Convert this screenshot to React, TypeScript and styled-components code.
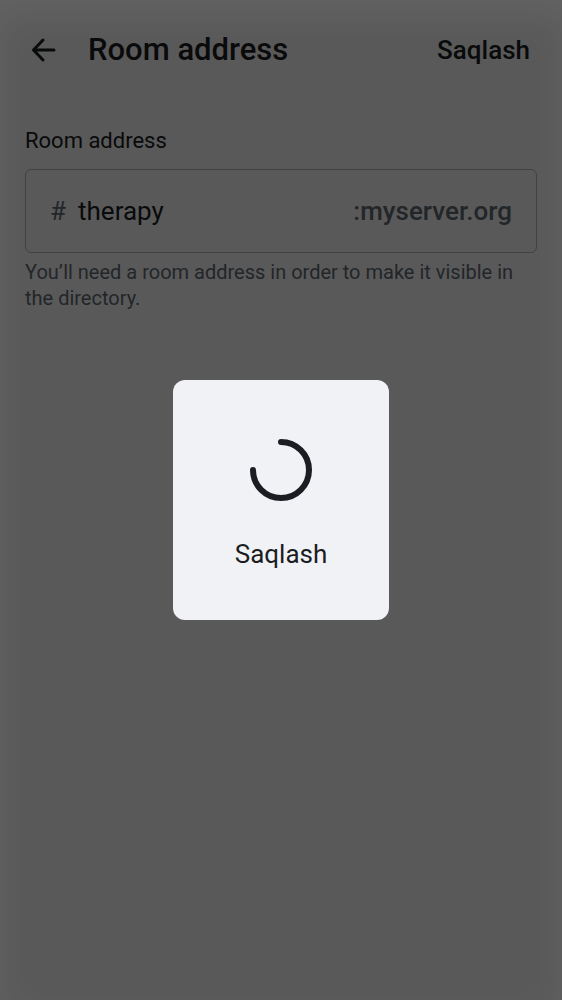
import React, { useState } from "react";
import styled, { createGlobalStyle, css } from "styled-components";

const GlobalStyle = createGlobalStyle`
  *, *::before, *::after { box-sizing: border-box; }
  body {
    margin: 0;
    background: #ffffff;
    color: #1b1d22;
    font-family: Roboto, "Noto Sans", sans-serif;
  }
`;

const bodyLarge = css`
  font-family: inherit;
  font-size: 26px;
  line-height: 36px;
`;

const bodySmall = css`
  font-size: 20px;
  line-height: 26px;
`;

const Screen = styled.div`
  min-height: 100vh;
  display: flex;
  flex-direction: column;
`;

const TopBar = styled.header`
  display: flex;
  align-items: center;
  height: 100px;
  padding: 0 24px;
`;

const BarButton = styled.button`
  display: flex;
  align-items: center;
  padding: 8px;
  border: 0;
  background: none;
  color: inherit;
  cursor: pointer;
  ${bodyLarge}
  font-weight: 500;
`;

const IconButton = styled(BarButton)`
  padding: 0;
`;

const Title = styled.h1`
  flex: 1;
  margin: 0 0 0 24px;
  font-size: 31px;
  line-height: 44px;
  font-weight: 500;
`;

const Form = styled.main`
  display: flex;
  flex-direction: column;
  padding: 27px 25px;
`;

const Label = styled.label`
  margin-bottom: 14px;
  font-size: 22px;
  line-height: 28px;
`;

const Field = styled.div`
  display: flex;
  align-items: center;
  height: 84px;
  padding: 0 24px;
  border: 1px solid #b4b9c1;
  border-radius: 6px;
`;

const Affix = styled.span<{ $strong?: boolean }>`
  ${bodyLarge}
  color: #656d77;
  font-weight: ${(p) => (p.$strong ? 500 : 400)};
`;

const AddressInput = styled.input`
  flex: 1;
  min-width: 0;
  margin-left: 12px;
  padding: 0;
  border: 0;
  outline: 0;
  background: none;
  color: inherit;
  ${bodyLarge}
`;

const Hint = styled.p`
  margin: 6px 0 0;
  color: #656d77;
  ${bodySmall}
`;

const Scrim = styled.div`
  position: fixed;
  inset: 0;
  display: grid;
  place-items: center;
  background: rgba(0, 0, 0, 0.65);
  box-shadow: inset 0 16px 32px rgba(255, 255, 255, 0.05);
`;

const Dialog = styled.div`
  display: flex;
  flex-direction: column;
  align-items: center;
  gap: 34px;
  padding: 58px 62px 48px;
  border-radius: 12px;
  background: #f0f2f5;
`;

const DialogText = styled.p`
  margin: 0;
  ${bodyLarge}
`;

function BackArrow() {
  return (
    <svg width="40" height="40" viewBox="0 0 40 40" fill="none" aria-hidden="true">
      <path
        d="M19 10 9.500 20 19 30M9.500 20H30"
        stroke="currentColor"
        strokeWidth="3"
        strokeLinecap="round"
        strokeLinejoin="round"
      />
    </svg>
  );
}

function Spinner() {
  return (
    <svg width="64" height="64" viewBox="0 0 64 64" fill="none" aria-hidden="true">
      <path
        d="M32 4A28 28 0 1 1 4 32"
        stroke="#1b1d22"
        strokeWidth="6"
        strokeLinecap="round"
      />
    </svg>
  );
}

export default function App() {
  const [address, setAddress] = useState("therapy");
  return (
    <>
      <GlobalStyle />
      <Screen>
        <TopBar>
          <IconButton type="button" aria-label="Back">
            <BackArrow />
          </IconButton>
          <Title>Room address</Title>
          <BarButton type="button">Saqlash</BarButton>
        </TopBar>
        <Form>
          <Label htmlFor="address">Room address</Label>
          <Field>
            <Affix>#</Affix>
            <AddressInput
              id="address"
              aria-describedby="address-hint"
              value={address}
              onChange={(e) => setAddress(e.target.value)}
            />
            <Affix $strong>:myserver.org</Affix>
          </Field>
          <Hint id="address-hint">
            You’ll need a room address in order to make it visible in the directory.
          </Hint>
        </Form>
      </Screen>
      <Scrim>
        <Dialog role="dialog" aria-modal="true" aria-labelledby="progress">
          <Spinner />
          <DialogText id="progress">Saqlash</DialogText>
        </Dialog>
      </Scrim>
    </>
  );
}
